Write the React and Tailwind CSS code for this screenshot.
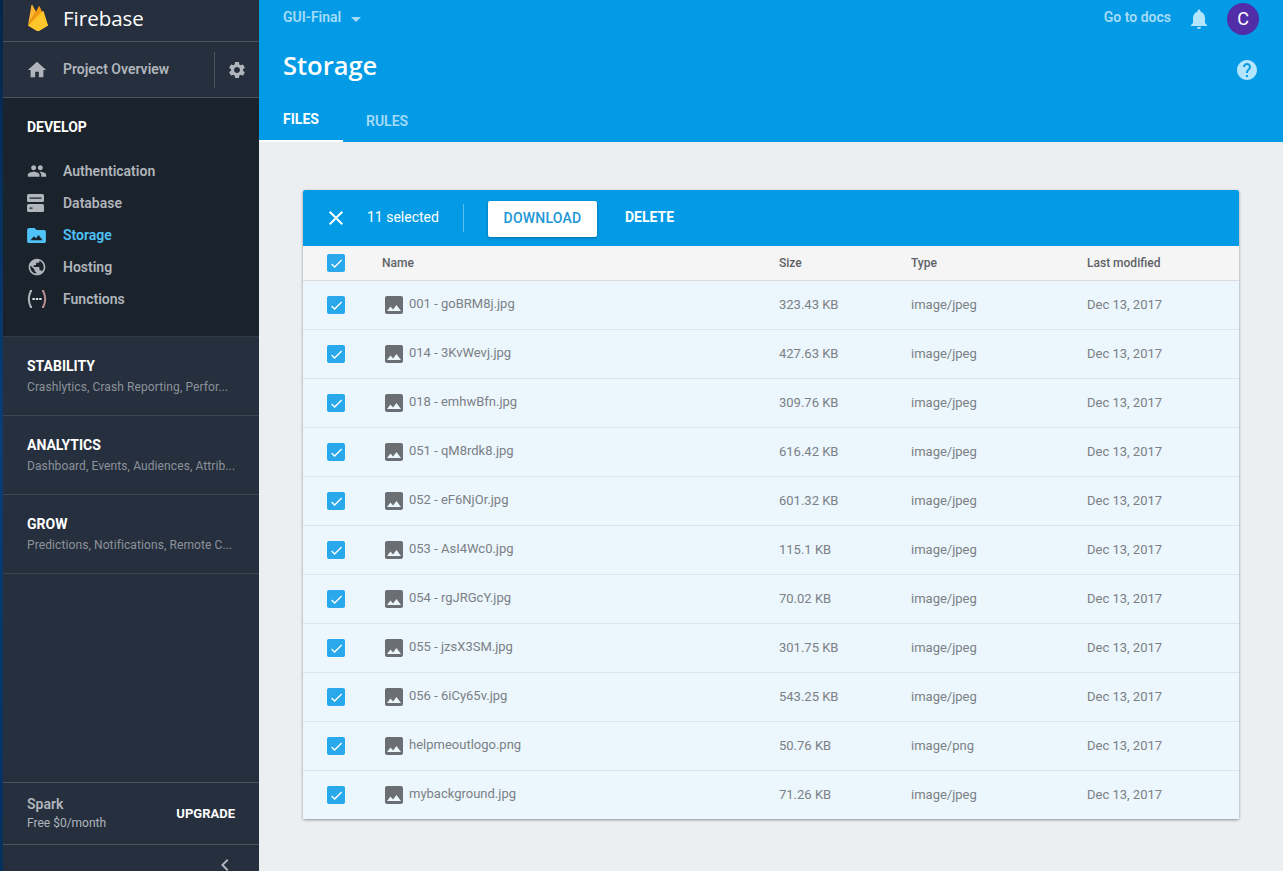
import React from "react";
import {
  MdHome,
  MdSettings,
  MdPeople,
  MdPublic,
  MdNotifications,
  MdHelp,
  MdClose,
  MdCheck,
  MdPhoto,
  MdArrowDropDown,
  MdChevronLeft,
} from "react-icons/md";

const files = [
  { name: "001 - goBRM8j.jpg", size: "323.43 KB", type: "image/jpeg" },
  { name: "014 - 3KvWevj.jpg", size: "427.63 KB", type: "image/jpeg" },
  { name: "018 - emhwBfn.jpg", size: "309.76 KB", type: "image/jpeg" },
  { name: "051 - qM8rdk8.jpg", size: "616.42 KB", type: "image/jpeg" },
  { name: "052 - eF6NjOr.jpg", size: "601.32 KB", type: "image/jpeg" },
  { name: "053 - AsI4Wc0.jpg", size: "115.1 KB", type: "image/jpeg" },
  { name: "054 - rgJRGcY.jpg", size: "70.02 KB", type: "image/jpeg" },
  { name: "055 - jzsX3SM.jpg", size: "301.75 KB", type: "image/jpeg" },
  { name: "056 - 6iCy65v.jpg", size: "543.25 KB", type: "image/jpeg" },
  { name: "helpmeoutlogo.png", size: "50.76 KB", type: "image/png" },
  { name: "mybackground.jpg", size: "71.26 KB", type: "image/jpeg" },
];

const collapsedGroups = [
  { title: "STABILITY", text: "Crashlytics, Crash Reporting, Perfor..." },
  { title: "ANALYTICS", text: "Dashboard, Events, Audiences, Attrib..." },
  { title: "GROW", text: "Predictions, Notifications, Remote C..." },
];

const FlameLogo = () => (
  <svg width="22" height="28" viewBox="0 0 22 28">
    <path d="M1 21.500 4.400 1.200c.1-.5.8-.7 1-.2l3.600 6.700L1 21.500z" fill="#ffb52e" />
    <path d="M1 21.500 9 7.700l2.700-5.100c.2-.4.8-.4 1 0L21 21.500l-10 5.800L1 21.500z" fill="#f59a0c" />
    <path d="M1 21.500 15.600 7.200c.4-.4 1-.2 1.100.3L21 21.500l-8.600 5.200c-.9.500-1.900.500-2.800 0L1 21.500z" fill="#ffc62b" />
  </svg>
);

const DatabaseIcon = () => (
  <svg width="17" height="18" viewBox="0 0 17 18" fill="#b0b5bb">
    <rect x="0" y="0" width="17" height="8" rx="1.500" />
    <rect x="0" y="10" width="17" height="8" rx="1.500" />
    <path d="M2.500 3.500h12v1.200h-12zM2.500 13.500h3v1.200h-3z" fill="#1a222c" />
  </svg>
);

const StorageIcon = () => (
  <svg width="19" height="15" viewBox="0 0 20 16" fill="#4fc3f7">
    <path d="M2 0h6l2 2h8c1.100 0 2 .9 2 2v10c0 1.100-.9 2-2 2H2c-1.100 0-2-.9-2-2V2C0 .9.900 0 2 0z" />
    <path d="M3.500 13l3.800-4.300 2.200 2.300 2.700-3.600 4.300 5.600H3.500z" fill="#1a222c" />
  </svg>
);

const FunctionsIcon = () => (
  <svg width="20" height="20" viewBox="0 0 20 20" fill="none" stroke="#b0b5bb" strokeWidth="2">
    <path d="M5 2H3.800C2.700 4.500 1.800 7 1.800 10s.9 5.500 2 8H5" />
    <path d="M15 2h1.200c1.100 2.500 2 5 2 8s-.9 5.500-2 8H15" stroke="#b98f95" />
    <path d="M5.400 10h2.400M8.800 10h2.400M12.200 10h2.400" stroke="#dfe1e3" strokeWidth="2" />
  </svg>
);

const Checkbox = () => (
  <div className="w-[18px] h-[18px] rounded-[2px] bg-[#29a8ec] flex items-center justify-center">
    <MdCheck className="text-white" size={15} />
  </div>
);

const NavItem = ({ icon, label, active }) => (
  <div className="h-8 flex items-center">
    <div className="w-[36px] flex items-center">{icon}</div>
    <span className={`text-[14px] font-semibold ${active ? "text-[#4fc3f7]" : "text-[#b0b5bb]"}`}>{label}</span>
  </div>
);

const Sidebar = () => (
  <aside className="w-[259px] shrink-0 h-full flex">
    <div className="w-[3px] shrink-0 bg-gradient-to-b from-[#04264a] via-[#0b3d76] to-[#04305c]" />
    <div className="flex-1 min-w-0 flex flex-col bg-[#262f3d]">
      <div className="h-[42px] shrink-0 pl-6 flex items-center border-b border-[#4a525e]">
        <div className="-mt-[6px]">
          <FlameLogo />
        </div>
        <span className="ml-[14px] text-[20.5px] text-white font-['Open_Sans',sans-serif] -mt-[4px]">Firebase</span>
      </div>
      <div className="h-[56px] shrink-0 pl-6 flex items-center border-b border-[#4a525e]">
        <div className="w-[36px]">
          <MdHome size={22} className="text-[#b0b5bb] -ml-[1px]" />
        </div>
        <span className="flex-1 text-[14px] font-semibold text-[#b0b5bb]">Project Overview</span>
        <div className="w-px h-9 bg-[#4a525e]" />
        <div className="w-[44px] flex justify-center">
          <MdSettings size={20} className="text-[#b0b5bb]" />
        </div>
      </div>
      <div className="h-[239px] shrink-0 bg-[#1a222c] pl-6 pt-[21px] border-b border-[#323a47]">
        <div className="text-[14px] font-bold text-white h-4 leading-4">DEVELOP</div>
        <div className="mt-[20px]">
          <NavItem icon={<MdPeople size={20} className="text-[#b0b5bb]" />} label="Authentication" />
          <NavItem icon={<DatabaseIcon />} label="Database" />
          <NavItem icon={<StorageIcon />} label="Storage" active />
          <NavItem icon={<MdPublic size={20} className="text-[#b0b5bb]" />} label="Hosting" />
          <NavItem icon={<FunctionsIcon />} label="Functions" />
        </div>
      </div>
      {collapsedGroups.map((g) => (
        <div key={g.title} className="h-[79px] shrink-0 pl-6 pt-[21px] border-b border-[#3d4552]">
          <div className="text-[14px] font-bold text-white leading-4">{g.title}</div>
          <div className="text-[12px] text-[#8c929b] tracking-[0.1px] leading-4 mt-[5px] whitespace-nowrap">{g.text}</div>
        </div>
      ))}
      <div className="flex-1" />
      <div className="h-[63px] shrink-0 pl-6 pr-6 flex items-center justify-between border-t border-b border-[#4a525e]">
        <div>
          <div className="text-[14px] font-semibold text-[#b0b5bb] leading-4">Spark</div>
          <div className="text-[12px] text-[#b0b5bb] leading-4 mt-[3px]">Free $0/month</div>
        </div>
        <span className="text-[13px] font-bold text-white">UPGRADE</span>
      </div>
      <div className="h-[26px] shrink-0 flex justify-end pr-[22px] pt-[8px]">
        <MdChevronLeft size={24} className="text-[#b0b5bb]" />
      </div>
    </div>
  </aside>
);

const Header = () => (
  <header className="h-[142px] shrink-0 bg-[#039be5] flex flex-col">
    <div className="h-[37px] flex items-center pl-6 pr-[24px]">
      <span className="text-[14px] font-semibold text-[#a5dbf7] -mt-[2px]">GUI-Final</span>
      <MdArrowDropDown size={24} className="text-[#a5dbf7] ml-[3px]" />
      <div className="flex-1" />
      <span className="text-[14px] font-semibold text-[#a5dbf7] -mt-[2px]">Go to docs</span>
      <MdNotifications size={24} className="text-[#b3e5fc] ml-[16px]" />
      <div className="ml-[16px] w-8 h-8 rounded-full bg-[#512da8] flex items-center justify-center text-white text-[18px]">C</div>
    </div>
    <div className="h-[58px] flex items-center pl-6 pr-[24px] justify-between">
      <h1 className="text-[25.500px] font-semibold text-white font-['Open_Sans',sans-serif] -mt-[1px]">Storage</h1>
      <MdHelp size={24} className="text-[#b3e5fc] mt-[8px]" />
    </div>
    <div className="flex-1 flex">
      <div className="w-[84px] border-b-2 border-white flex items-center justify-center pt-[3px] text-[14px] font-bold text-white">FILES</div>
      <div className="ml-[23px] flex items-center text-[14px] pt-[5px] font-semibold text-[#a5dbf7]">RULES</div>
    </div>
  </header>
);

const Toolbar = () => (
  <div className="h-[56px] bg-[#039be5] rounded-t-[2px] flex items-center pl-[24px]">
    <MdClose size={24} className="text-white -ml-[3px]" />
    <span className="ml-[19px] text-[14px] text-white -mt-[2px]">11 selected</span>
    <div className="w-px h-7 bg-[#5cc0ef] ml-[24px]" />
    <button className="ml-[24px] w-[109px] h-9 mt-[1px] bg-white rounded-[2px] text-[14px] font-medium text-[#2196d8] tracking-[0.2px] shadow-[0_1px_3px_rgba(0,0,0,0.3)]">
      DOWNLOAD
    </button>
    <span className="ml-[28px] text-[14px] font-bold text-white -mt-[1px]">DELETE</span>
  </div>
);

const Row = ({ file }) => (
  <div className="h-[49px] last:h-[48px] flex items-center border-b border-[#d9e3e9] last:border-b-0 bg-[#ebf6fd] text-[13px] text-[#7c8085]">
    <div className="w-[79px] pl-[24px]">
      <Checkbox />
    </div>
    <div className="w-[397px] flex items-center">
      <MdPhoto size={24} className="text-[#6b6f74] -mt-[1px]" />
      <span className="ml-[3px] -mt-[3px]">{file.name}</span>
    </div>
    <div className="w-[132px]">{file.size}</div>
    <div className="w-[176px]">{file.type}</div>
    <div>Dec 13, 2017</div>
  </div>
);

const FilesCard = () => (
  <div className="w-[936px] bg-white rounded-[2px] shadow-[0_1px_3px_rgba(0,0,0,0.4)]">
    <Toolbar />
    <div className="h-[35px] flex items-center bg-[#f5f5f5] border-b border-[#dcdcdc] text-[12px] font-medium text-[#5f6368]">
      <div className="w-[79px] pl-[24px]">
        <Checkbox />
      </div>
      <div className="w-[397px]">Name</div>
      <div className="w-[132px]">Size</div>
      <div className="w-[176px]">Type</div>
      <div>Last modified</div>
    </div>
    {files.map((f) => (
      <Row key={f.name} file={f} />
    ))}
  </div>
);

export default function App() {
  return (
    <div className="h-[871px] w-full flex overflow-hidden bg-[#eceff1] font-['Roboto',sans-serif]">
      <Sidebar />
      <main className="flex-1 flex flex-col min-w-0">
        <Header />
        <div className="pt-[48px] pl-[44px]">
          <FilesCard />
        </div>
      </main>
    </div>
  );
}
